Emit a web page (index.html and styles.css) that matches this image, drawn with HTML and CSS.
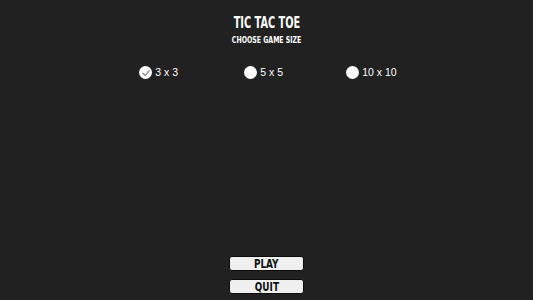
FILE: index.html
```html
<!DOCTYPE html>
<html>
<head>
<meta charset="utf-8">
<link rel="stylesheet" href="styles.css">
</head>
<body>
<div class="screen">
  <header class="head">
    <h1 class="title">TIC TAC TOE</h1>
    <h2 class="subtitle">CHOOSE GAME SIZE</h2>
  </header>
  <div class="options">
    <div class="opt opt-a">
      <span class="radio checked">
        <svg viewBox="0 0 12 12" width="12" height="12"><path d="M3 6.3 L5.2 8.4 L9.2 3.8" fill="none" stroke="#9a9a9a" stroke-width="1.6" stroke-linecap="round" stroke-linejoin="round"/></svg>
      </span>
      <span class="label">3 x 3</span>
    </div>
    <div class="opt opt-b">
      <span class="radio"></span>
      <span class="label">5 x 5</span>
    </div>
    <div class="opt">
      <span class="radio"></span>
      <span class="label">10 x 10</span>
    </div>
  </div>
  <div class="spacer"></div>
  <div class="buttons">
    <button class="btn"><span class="btn-text">PLAY</span></button>
    <button class="btn"><span class="btn-text">QUIT</span></button>
  </div>
</div>
</body>
</html>
```
FILE: styles.css
```css
html, body {
  margin: 0;
  padding: 0;
  background: #212121;
}
.screen {
  width: 533px;
  height: 300px;
  display: flex;
  flex-direction: column;
  align-items: center;
  color: #fff;
  font-family: "Liberation Sans", Arial, sans-serif;
}
.head {
  display: flex;
  flex-direction: column;
  align-items: center;
  padding-top: 15px;
}
.title {
  margin: 0;
  font-family: "DejaVu Sans Condensed", sans-serif;
  font-weight: bold;
  font-size: 16px;
  line-height: 16px;
  transform: scaleX(0.68);
}
.subtitle {
  margin: 4px 0 0;
  font-family: "DejaVu Sans Condensed", sans-serif;
  font-weight: bold;
  font-size: 9.5px;
  line-height: 10px;
  transform: scaleX(0.73);
}
.options {
  display: flex;
  margin-top: 21px;
  padding-left: 3px;
}
.opt {
  display: flex;
  align-items: center;
  gap: 3px;
}
.opt-a {
  width: 105px;
}
.opt-b {
  width: 102px;
}
.radio {
  flex: none;
  width: 13px;
  height: 13px;
  border-radius: 50%;
  background: #fff;
  display: flex;
  align-items: center;
  justify-content: center;
}
.label {
  font-size: 10.5px;
  line-height: 13px;
}
.spacer {
  flex: 1;
}
.buttons {
  display: flex;
  flex-direction: column;
  gap: 8px;
  padding-bottom: 6px;
}
.btn {
  width: 75px;
  height: 15px;
  margin: 0;
  padding: 0;
  background: #efefef;
  border: 1px solid #0c0c0c;
  border-radius: 3px;
  color: #111;
  display: flex;
  align-items: center;
  justify-content: center;
}
.btn-text {
  display: inline-block;
  font-family: "DejaVu Sans Condensed", sans-serif;
  font-weight: bold;
  font-size: 13px;
  line-height: 13px;
  transform: scaleX(0.76);
}
```
